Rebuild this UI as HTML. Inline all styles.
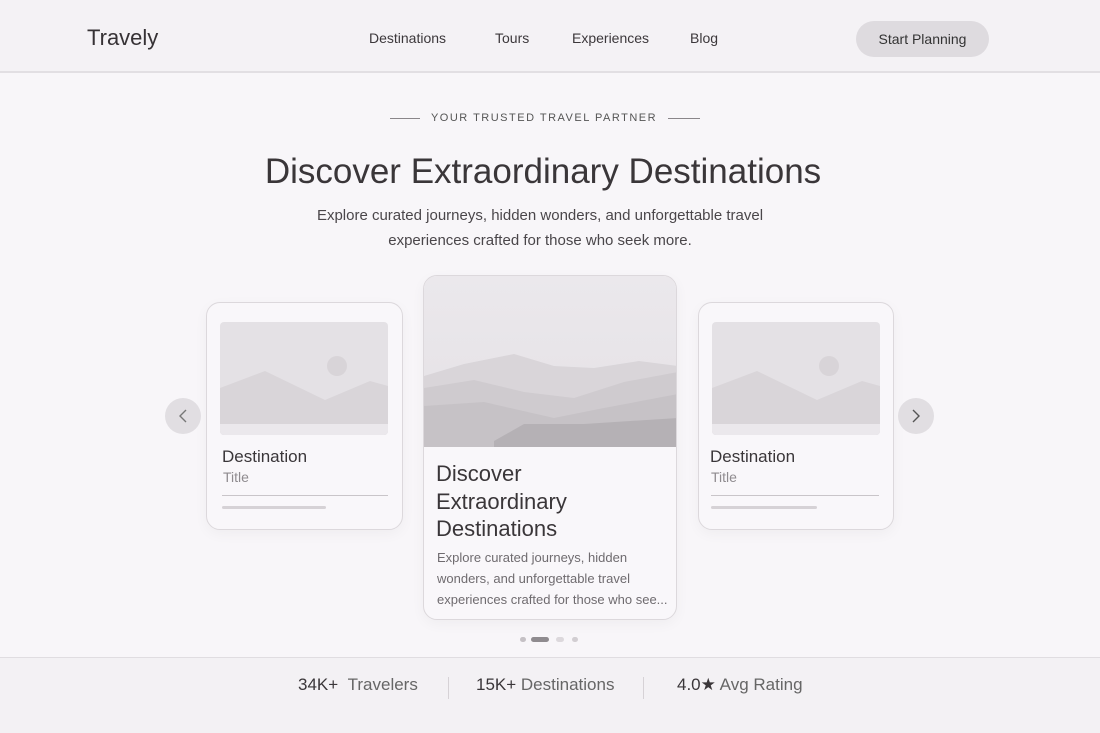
<!DOCTYPE html>
<html><head><meta charset="utf-8"><style>
*{margin:0;padding:0;box-sizing:border-box}
body{width:1100px;height:733px;background:#f8f6f9;font-family:"Liberation Sans",sans-serif;color:#3a3639;position:relative;overflow:hidden}
.a{position:absolute}
header{position:absolute;left:0;top:0;width:1100px;height:73px;background:#f4f2f5;border-bottom:2px solid #e2dfe3}
.nav{font-size:14px;color:#3c383b;top:30px}
.card{position:absolute;background:#f9f7fa;border:1.5px solid #dcd8dc;border-radius:14px;box-shadow:0 4px 14px rgba(0,0,0,0.04)}
.ph{position:absolute;border-radius:4px;overflow:hidden;background:#e4e1e5}
.arrow{position:absolute;width:36px;height:36px;border-radius:50%;background:#e1dee2}
</style></head><body>
<header>
<div class="a" style="left:87px;top:25px;font-size:22px;color:#363235">Travely</div>
<div class="a nav" style="left:369px">Destinations</div>
<div class="a nav" style="left:495px">Tours</div>
<div class="a nav" style="left:572px">Experiences</div>
<div class="a nav" style="left:690px">Blog</div>
<div class="a" style="left:856px;top:21px;width:133px;height:36px;border-radius:18px;background:#dedbdf;font-size:14px;line-height:36px;text-align:center;color:#333">Start Planning</div>
</header>
<div class="a" style="left:390px;top:118px;width:30px;height:1px;background:#8a868a"></div>
<div class="a" style="left:668px;top:118px;width:32px;height:1px;background:#8a868a"></div>
<div class="a" style="left:420px;top:112px;width:248px;text-align:center;font-size:11px;letter-spacing:1.5px;color:#555">YOUR TRUSTED TRAVEL PARTNER</div>
<div class="a" style="left:0;top:152px;width:1086px;text-align:center;font-size:35px;color:#3a3639">Discover Extraordinary Destinations</div>
<div class="a" style="left:0;top:203px;width:1080px;text-align:center;font-size:15px;line-height:25px;color:#4a464a">Explore curated journeys, hidden wonders, and unforgettable travel<br>experiences crafted for those who seek more.</div>

<div class="card" style="left:206px;top:302px;width:197px;height:228px">
<div class="ph" style="left:13px;top:19px;width:168px;height:113px"><svg width="168" height="113"><circle cx="117" cy="44" r="10" fill="#d8d4d8"/><path d="M0 34 L0 66 L45 49 L105 78 L150 59 L168 64 V113 H0Z" fill="#d9d5d9"/><rect y="102" width="168" height="11" fill="#ebe8ec"/></svg></div>
<div class="a" style="left:15px;top:144px;font-size:17px;color:#3a3639">Destination</div>
<div class="a" style="left:16px;top:166px;font-size:14px;color:#8f8b8f">Title</div>
<div class="a" style="left:15px;top:192px;width:166px;height:1px;background:#c9c5c9"></div>
<div class="a" style="left:15px;top:203px;width:104px;height:3px;border-radius:2px;background:#d6d2d6"></div>
</div>

<div class="card" style="left:423px;top:275px;width:254px;height:345px;overflow:hidden">
<svg class="a" style="left:0;top:0" width="254" height="171"><defs><linearGradient id="s" x1="0" y1="0" x2="0" y2="1"><stop offset="0" stop-color="#ebe8ec"/><stop offset="1" stop-color="#e4e1e5"/></linearGradient></defs><rect width="254" height="171" fill="url(#s)"/><path d="M0 100 L40 88 L90 78 L130 90 L170 92 L215 85 L254 90 V171 H0Z" fill="#d9d5d9"/><path d="M0 112 L50 104 L100 116 L150 122 L200 106 L254 96 V171 H0Z" fill="#cfcbcf"/><path d="M0 130 L60 126 L130 142 L180 132 L254 118 V171 H0Z" fill="#c6c2c6"/><path d="M70 165 L100 148 L160 148 L254 142 V171 H70Z" fill="#b5b1b5"/></svg>
<div class="a" style="left:12px;top:184px;font-size:22px;line-height:27.5px;color:#3a3639">Discover<br>Extraordinary<br>Destinations</div>
<div class="a" style="left:13px;top:271px;font-size:13px;line-height:21px;color:#6f6b6f;white-space:nowrap">Explore curated journeys, hidden<br>wonders, and unforgettable travel<br>experiences crafted for those who see...</div>
</div>

<div class="card" style="left:698px;top:302px;width:196px;height:228px">
<div class="ph" style="left:13px;top:19px;width:168px;height:113px"><svg width="168" height="113"><circle cx="117" cy="44" r="10" fill="#d8d4d8"/><path d="M0 66 L45 49 L105 78 L150 59 L168 64 V113 H0Z" fill="#d9d5d9"/><rect y="102" width="168" height="11" fill="#ebe8ec"/></svg></div>
<div class="a" style="left:11px;top:144px;font-size:17px;color:#3a3639">Destination</div>
<div class="a" style="left:12px;top:166px;font-size:14px;color:#8f8b8f">Title</div>
<div class="a" style="left:12px;top:192px;width:168px;height:1px;background:#c9c5c9"></div>
<div class="a" style="left:12px;top:203px;width:106px;height:3px;border-radius:2px;background:#d6d2d6"></div>
</div>

<div class="arrow" style="left:165px;top:398px"><svg width="36" height="36"><path d="M21 12 L15 18 L21 24" fill="none" stroke="#777" stroke-width="1.4"/></svg></div>
<div class="arrow" style="left:898px;top:398px"><svg width="36" height="36"><path d="M15 12 L21 18 L15 24" fill="none" stroke="#555" stroke-width="1.4"/></svg></div>

<div class="a" style="left:520px;top:637px;width:6px;height:5px;border-radius:3px;background:#c5c1c5"></div>
<div class="a" style="left:531px;top:637px;width:18px;height:5px;border-radius:3px;background:#8f8b8f"></div>
<div class="a" style="left:556px;top:637px;width:8px;height:5px;border-radius:3px;background:#dcd8dc"></div>
<div class="a" style="left:572px;top:637px;width:6px;height:5px;border-radius:3px;background:#d2ced2"></div>

<div class="a" style="left:0;top:657px;width:1100px;height:76px;background:#f3f1f4;border-top:1.5px solid #e0dde1"></div>
<div class="a" style="left:298px;top:675px;font-size:17px;color:#3a3639">34K+ <span style="color:#666">&nbsp;Travelers</span></div>
<div class="a" style="left:448px;top:677px;width:1px;height:22px;background:#d6d2d6"></div>
<div class="a" style="left:476px;top:675px;font-size:17px;color:#3a3639">15K+ <span style="color:#666">Destinations</span></div>
<div class="a" style="left:643px;top:677px;width:1px;height:22px;background:#d6d2d6"></div>
<div class="a" style="left:677px;top:675px;font-size:17px;color:#3a3639">4.0★ <span style="color:#666">Avg Rating</span></div>
</body></html>
